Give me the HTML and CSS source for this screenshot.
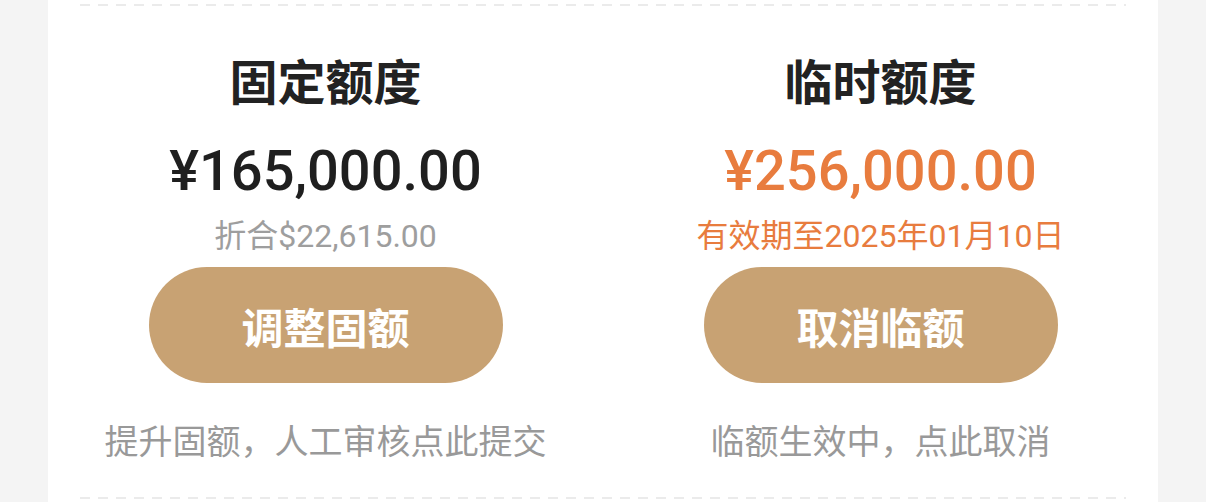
FILE: index.html
```html
<!DOCTYPE html>
<html lang="zh-CN">
<head>
  <meta charset="UTF-8">
  <meta name="viewport" content="width=device-width, initial-scale=1.0">
  <title>额度管理</title>
  <link rel="stylesheet" href="styles.css">
</head>
<body>
  <div class="card">
    <div class="dash"></div>
    <div class="quota-row">
      <div class="quota">
        <div class="quota-title">固定额度</div>
        <div class="quota-amount">¥165,000.00</div>
        <div class="quota-sub">折合$22,615.00</div>
        <button class="quota-btn">调整固额</button>
        <div class="quota-hint">提升固额，人工审核点此提交</div>
      </div>
      <div class="quota">
        <div class="quota-title">临时额度</div>
        <div class="quota-amount orange">¥256,000.00</div>
        <div class="quota-sub orange">有效期至2025年01月10日</div>
        <button class="quota-btn">取消临额</button>
        <div class="quota-hint">临额生效中，点此取消</div>
      </div>
    </div>
    <div class="dash"></div>
  </div>
</body>
</html>
```

FILE: styles.css
```css
body {
  margin: 0;
  background-color: #f4f4f4;
  font-family: Roboto, "Noto Sans CJK SC", sans-serif;
}
.card {
  width: 1110px;
  height: 502px;
  margin-left: 48px;
  background-color: #ffffff;
  padding-top: 4px;
  box-sizing: border-box;
}
.dash {
  height: 2px;
  margin: 0 32px 0 32px;
  background: repeating-linear-gradient(to right, #ebebeb 0 10px, transparent 10px 18px);
}
.quota-row {
  display: grid;
  grid-template-columns: 1fr 1fr;
  padding-top: 41px;
  height: 491px;
  box-sizing: border-box;
}
.quota {
  display: flex;
  flex-direction: column;
  align-items: center;
}
.quota-title {
  font-family: "Noto Sans CJK SC", sans-serif;
  font-size: 48px;
  line-height: 64px;
  font-weight: 700;
  color: #222222;
}
.quota-amount {
  margin-top: 24px;
  font-size: 56px;
  line-height: 72px;
  font-weight: 500;
  color: #1f1f1f;
}
.quota-sub {
  margin-top: 7px;
  font-size: 32px;
  line-height: 44px;
  color: #9e9e9e;
}
.orange {
  color: #e87c3e;
}
.quota-btn {
  margin-top: 9px;
  width: 354px;
  height: 116px;
  border: none;
  border-radius: 58px;
  background-color: #c8a273;
  color: #ffffff;
  font-family: "Noto Sans CJK SC", sans-serif;
  font-size: 42px;
  font-weight: 700;
  cursor: pointer;
}
.quota-hint {
  margin-top: 33px;
  font-family: "Noto Sans CJK SC", sans-serif;
  font-size: 34px;
  line-height: 48px;
  color: #999999;
}
```
